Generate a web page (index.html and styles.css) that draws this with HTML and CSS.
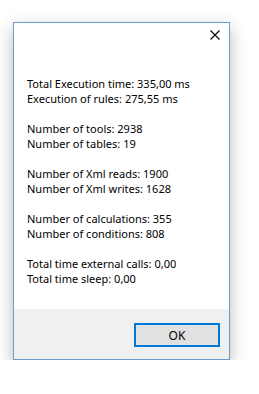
FILE: index.html
```html
<!DOCTYPE html>
<html>
<head>
<meta charset="utf-8">
<link rel="stylesheet" href="styles.css">
</head>
<body>
<div class="dialog">
  <div class="titlebar">
    <svg class="close" width="10" height="10" viewBox="0 0 10 10"><path d="M0.5 0.5L9.5 9.5M9.5 0.5L0.5 9.5" stroke="#000" stroke-width="1.1" fill="none"/></svg>
  </div>
  <div class="content">
    <div class="group"><div>Total Execution time: 335,00 ms</div><div>Execution of rules: 275,55 ms</div></div>
    <div class="group"><div>Number of tools: 2938</div><div>Number of tables: 19</div></div>
    <div class="group"><div>Number of Xml reads: 1900</div><div>Number of Xml writes: 1628</div></div>
    <div class="group"><div>Number of calculations: 355</div><div>Number of conditions: 808</div></div>
    <div class="group"><div>Total time external calls: 0,00</div><div>Total time sleep: 0,00</div></div>
  </div>
  <div class="footer">
    <button class="ok">OK</button>
  </div>
</div>
</body>
</html>
```
FILE: styles.css
```css
html, body {
  margin: 0;
  padding: 0;
  background: #fff;
}
body {
  padding: 22px 0 0 13px;
  font-family: "Noto Sans", "Open Sans", sans-serif;
}
.dialog {
  width: 217px;
  height: 338px;
  box-sizing: border-box;
  border: 1px solid #6e9dc9;
  background: #fff;
  box-shadow: 0 6px 16px rgba(0,0,0,0.28);
  display: flex;
  flex-direction: column;
}
.titlebar {
  height: 30px;
  display: flex;
  justify-content: flex-end;
  align-items: flex-start;
}
.close {
  margin: 7px 9px 0 0;
  display: block;
}
.content {
  flex: 1;
  padding: 23px 0 0 13px;
  font-size: 11px;
  line-height: 15px;
  color: #000;
  display: flex;
  flex-direction: column;
  gap: 15px;
  white-space: nowrap;
}
.footer {
  height: 50px;
  background: #f0f0f0;
  display: flex;
  justify-content: flex-end;
  align-items: flex-start;
  padding: 14px 9px 0 0;
  box-sizing: border-box;
}
.ok {
  width: 86px;
  height: 24px;
  box-sizing: border-box;
  border: 2px solid #0078d7;
  background: #e1e1e1;
  font-family: "Noto Sans", "Open Sans", sans-serif;
  font-size: 12px;
  color: #000;
  padding: 0;
  margin: 0;
}
```
